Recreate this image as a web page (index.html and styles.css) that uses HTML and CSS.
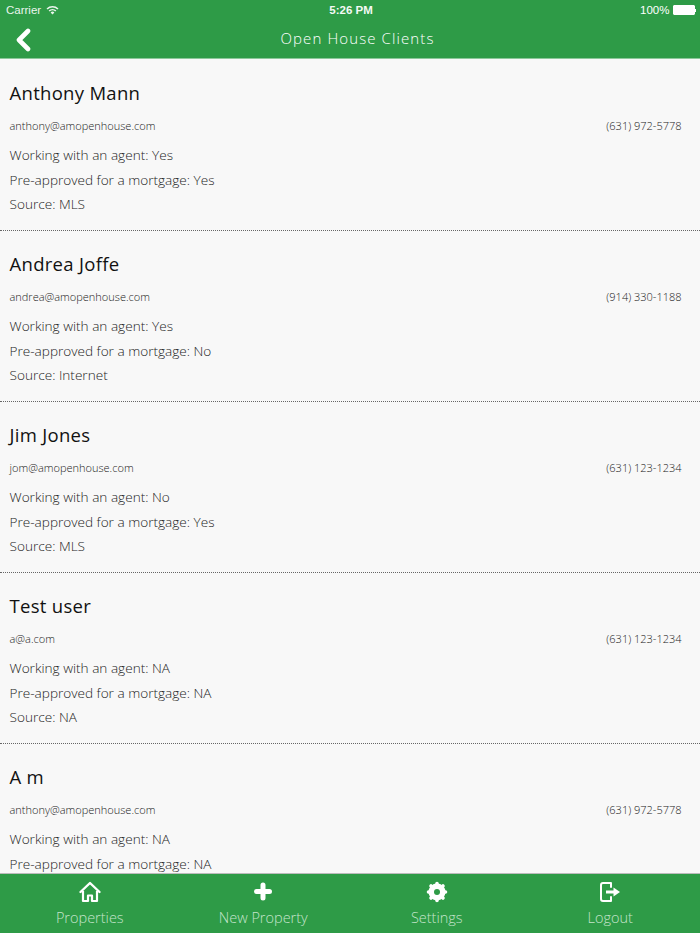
FILE: index.html
```html
<!DOCTYPE html>
<html lang="en">
<head>
    <meta charset="UTF-8">
    <meta name="viewport" content="width=device-width, initial-scale=1.0">
    <title>Open House Clients</title>
    <link rel="stylesheet" href="styles.css">
</head>
<body>
    <div class="app">
        <header class="top">
            <div class="status-bar">
                <div class="status-left">
                    <span>Carrier</span>
                    <svg class="wifi" width="13" height="10" viewBox="0 0 13 10">
                        <path d="M0.5 3.4 A8.5 8.5 0 0 1 12.5 3.4 L11.4 4.6 A7 7 0 0 0 1.6 4.6 Z" fill="#fff"/>
                        <path d="M2.6 5.5 A5.6 5.6 0 0 1 10.4 5.5 L9.3 6.6 A4 4 0 0 0 3.7 6.6 Z" fill="#fff"/>
                        <path d="M4.6 7.5 A2.8 2.8 0 0 1 8.4 7.5 L6.5 9.6 Z" fill="#fff"/>
                    </svg>
                </div>
                <div class="status-time">5:26 PM</div>
                <div class="status-right">
                    <span>100%</span>
                    <div class="battery"><div class="battery-fill"></div></div>
                    <div class="battery-tip"></div>
                </div>
            </div>
            <div class="nav-bar">
                <svg class="back" width="16" height="24" viewBox="0 0 16 24">
                    <path d="M13 3 L4 12 L13 21" fill="none" stroke="#fff" stroke-width="4.6" stroke-linecap="round" stroke-linejoin="round"/>
                </svg>
                <div class="nav-title">Open House Clients</div>
            </div>
        </header>

        <main class="client-list">
            <section class="client">
                <h2 class="client-name">Anthony Mann</h2>
                <div class="client-contact"><span>anthony@amopenhouse.com</span><span>(631) 972-5778</span></div>
                <p>Working with an agent: Yes</p>
                <p>Pre-approved for a mortgage: Yes</p>
                <p>Source: MLS</p>
            </section>
            <section class="client">
                <h2 class="client-name">Andrea Joffe</h2>
                <div class="client-contact"><span>andrea@amopenhouse.com</span><span>(914) 330-1188</span></div>
                <p>Working with an agent: Yes</p>
                <p>Pre-approved for a mortgage: No</p>
                <p>Source: Internet</p>
            </section>
            <section class="client">
                <h2 class="client-name">Jim Jones</h2>
                <div class="client-contact"><span>jom@amopenhouse.com</span><span>(631) 123-1234</span></div>
                <p>Working with an agent: No</p>
                <p>Pre-approved for a mortgage: Yes</p>
                <p>Source: MLS</p>
            </section>
            <section class="client">
                <h2 class="client-name">Test user</h2>
                <div class="client-contact"><span>a@a.com</span><span>(631) 123-1234</span></div>
                <p>Working with an agent: NA</p>
                <p>Pre-approved for a mortgage: NA</p>
                <p>Source: NA</p>
            </section>
            <section class="client">
                <h2 class="client-name">A m</h2>
                <div class="client-contact"><span>anthony@amopenhouse.com</span><span>(631) 972-5778</span></div>
                <p>Working with an agent: NA</p>
                <p>Pre-approved for a mortgage: NA</p>
            </section>
        </main>

        <nav class="tabs">
            <div class="tab">
                <svg width="24" height="24" viewBox="0 0 24 24">
                    <path d="M2.5 12 L12 3 L21.5 12" fill="none" stroke="#fff" stroke-width="2.4" stroke-linecap="round" stroke-linejoin="round"/>
                    <path d="M5 11 V21 H10 V15.5 H14 V21 H19 V11" fill="none" stroke="#fff" stroke-width="2.2" stroke-linejoin="round"/>
                </svg>
                <span>Properties</span>
            </div>
            <div class="tab">
                <svg width="24" height="24" viewBox="0 0 24 24">
                    <path d="M12 5 V18 M5.5 11.5 H18.5" fill="none" stroke="#fff" stroke-width="5" stroke-linecap="round"/>
                </svg>
                <span>New Property</span>
            </div>
            <div class="tab">
                <svg width="24" height="24" viewBox="0 0 24 24">
                    <circle cx="12" cy="12" r="6.2" fill="none" stroke="#fff" stroke-width="4.6"/>
                    <path d="M12 3.5 V20.5 M3.5 12 H20.5 M6 6 L18 18 M18 6 L6 18" fill="none" stroke="#fff" stroke-width="3.6" stroke-linecap="round"/>
                    <circle cx="12" cy="12" r="3" fill="#2e9b47"/>
                </svg>
                <span>Settings</span>
            </div>
            <div class="tab">
                <svg width="24" height="24" viewBox="0 0 24 24">
                    <path d="M13 3 H5 Q3 3 3 5 V19 Q3 21 5 21 H13 M13 3 V7 M13 17 V21" fill="none" stroke="#fff" stroke-width="2" stroke-linecap="round"/>
                    <path d="M8 12 H16" fill="none" stroke="#fff" stroke-width="3"/>
                    <path d="M15.5 7.5 L22 12 L15.5 16.5 Z" fill="#fff"/>
                </svg>
                <span>Logout</span>
            </div>
        </nav>
    </div>
</body>
</html>
```

FILE: styles.css
```css
html, body {
    margin: 0;
    height: 100%;
}
body {
    font-family: "Open Sans", sans-serif;
    font-weight: 300;
    background-color: #f8f8f8;
    color: #222;
}
.app {
    display: flex;
    flex-direction: column;
    height: 933px;
    overflow: hidden;
}

/* header */
.top {
    background-color: #2e9b47;
    border-bottom: 1px solid #8cc89a;
    color: white;
    height: 58px;
    flex-shrink: 0;
}
.status-bar {
    display: grid;
    grid-template-columns: 1fr auto 1fr;
    align-items: center;
    height: 20px;
    padding: 0 4px 0 6px;
    font-family: "Liberation Sans", Arial, sans-serif;
    font-size: 11.5px;
    font-weight: 400;
}
.status-left {
    display: flex;
    align-items: center;
    gap: 5px;
    opacity: 0.9;
}
.status-time {
    font-weight: 700;
    opacity: 0.95;
}
.status-right {
    display: flex;
    align-items: center;
    justify-content: flex-end;
}
.battery {
    width: 20px;
    height: 8px;
    margin-left: 3px;
    border: 1px solid #fff;
    border-radius: 1px;
}
.battery-fill {
    height: 100%;
    background-color: white;
}
.battery-tip {
    width: 1.5px;
    height: 3px;
    background-color: white;
}
.nav-bar {
    display: flex;
    align-items: center;
    height: 38px;
    padding-left: 15px;
}
.back {
    flex-shrink: 0;
    margin-top: 2px;
}
.nav-title {
    flex: 1;
    text-align: center;
    font-size: 15px;
    letter-spacing: 1.1px;
    padding-right: 16px;
    margin-top: -2px;
}

/* client rows */
.client-list {
    flex: 1;
    min-height: 0;
    overflow: hidden;
    padding-top: 1px;
}
.client {
    box-sizing: border-box;
    height: 171px;
    padding: 19px 18.5px 0 9.5px;
    border-bottom: 1px dotted #666;
}
.client-name {
    margin: 0;
    font-size: 18.5px;
    font-weight: 400;
    letter-spacing: 0.3px;
    line-height: 28px;
    color: #111;
}
.client-contact {
    display: flex;
    justify-content: space-between;
    margin: 10px 0 8px;
    font-size: 11px;
    line-height: 18px;
    font-weight: 300;
    color: #222;
}
.client p {
    margin: 0;
    font-size: 13.6px;
    line-height: 24.5px;
    color: #1c1c1c;
}

/* bottom tabs */
.tabs {
    display: grid;
    grid-template-columns: repeat(4, 1fr);
    height: 60px;
    flex-shrink: 0;
    padding: 0 3px;
    border-top: 1px solid #bbb;
    box-sizing: border-box;
    background-color: #2e9b47;
    color: #c4e4cb;
}
.tab {
    display: flex;
    flex-direction: column;
    align-items: center;
    padding-top: 6px;
    font-size: 14.5px;
    line-height: 20px;
}
.tab svg {
    display: block;
    margin-bottom: 4px;
}
```
